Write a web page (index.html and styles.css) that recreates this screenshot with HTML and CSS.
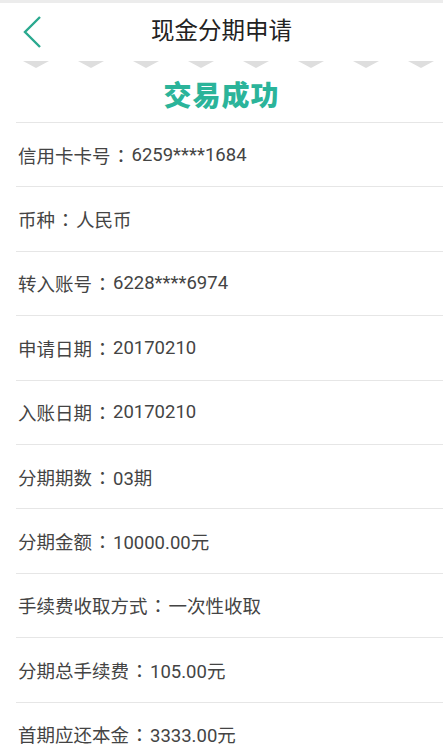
FILE: index.html
```html
<!DOCTYPE html>
<html lang="zh">
<head>
<meta charset="utf-8">
<link rel="stylesheet" href="styles.css">
</head>
<body>
<div class="topline"></div>
<header class="header">
  <svg class="back" width="24" height="34" viewBox="0 0 24 34"><path d="M19 2 L4 17 L19 32" fill="none" stroke="#2aa98f" stroke-width="2.4"/></svg>
  <h1 class="title">现金分期申请</h1>
</header>
<div class="zigzag">
  <span class="tri"></span><span class="tri"></span><span class="tri"></span><span class="tri"></span>
  <span class="tri"></span><span class="tri"></span><span class="tri"></span><span class="tri"></span>
</div>
<div class="status">交易成功</div>
<ul class="list">
  <li class="row">信用卡卡号<span class="colon">：</span>6259****1684</li>
  <li class="row">币种<span class="colon">：</span>人民币</li>
  <li class="row">转入账号<span class="colon">：</span>6228****6974</li>
  <li class="row">申请日期<span class="colon">：</span>20170210</li>
  <li class="row">入账日期<span class="colon">：</span>20170210</li>
  <li class="row">分期期数<span class="colon">：</span>03期</li>
  <li class="row">分期金额<span class="colon">：</span>10000.00元</li>
  <li class="row">手续费收取方式<span class="colon">：</span>一次性收取</li>
  <li class="row">分期总手续费<span class="colon">：</span>105.00元</li>
  <li class="row">首期应还本金<span class="colon">：</span>3333.00元</li>
</ul>
</body>
</html>
```

FILE: styles.css
```css
html, body {
  margin: 0;
  padding: 0;
  background: #fff;
}
body {
  width: 443px;
  height: 753px;
  overflow: hidden;
  font-family: Roboto, "Noto Sans CJK SC", sans-serif;
  color: #333;
}
.topline {
  height: 3px;
  background: #ececec;
}
.header {
  position: relative;
  height: 53px;
  display: flex;
  align-items: center;
  justify-content: center;
}
.back {
  position: absolute;
  left: 21px;
  top: 12px;
}
.title {
  margin: 0;
  font-size: 23.5px;
  font-weight: 400;
  color: #222;
  line-height: 1;
  margin-top: 5px;
}
.zigzag {
  display: flex;
  gap: 29px;
  padding-left: 23px;
  margin-top: 5px;
  height: 7px;
}
.tri {
  width: 0;
  height: 0;
  border-left: 13px solid transparent;
  border-right: 13px solid transparent;
  border-top: 7px solid #dedede;
}
.status {
  text-align: center;
  font-family: "Noto Sans CJK SC", sans-serif;
  font-size: 28px;
  font-weight: 900;
  color: #2bb49a;
  line-height: 1;
  margin-top: 12px;
  height: 42px;
  letter-spacing: 1px;
}
.list {
  list-style: none;
  margin: 0;
  padding: 0 0 0 16px;
}
.row {
  border-top: 1px solid #e6e6e6;
  display: flex;
  align-items: center;
  padding-left: 2px;
  font-size: 18.5px;
  color: #444;
  box-sizing: border-box;
  height: 64.4px;
}
.colon {
  display: inline-block;
  width: 21px;
  text-align: center;
  font-family: "Noto Sans CJK TC", sans-serif;
  font-weight: 400;
  color: #444;
}
```
